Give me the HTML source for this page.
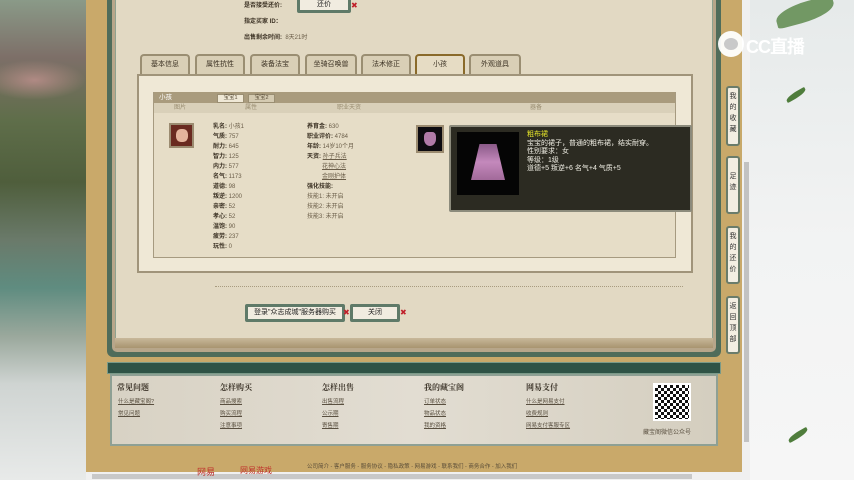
<!DOCTYPE html>
<html><head><meta charset="utf-8"><style>
*{margin:0;padding:0;box-sizing:border-box}
body{width:854px;height:480px;overflow:hidden;position:relative;background:#eef0ef;font-family:"Liberation Sans","Noto Sans CJK SC",sans-serif;font-size:7px;color:#5a4d38}
.a{position:absolute}
.tab{position:absolute;top:54px;height:21px;background:#d9cfb6;border:2px solid #9a8e72;border-bottom:none;border-radius:4px 4px 0 0;font-size:7px;color:#3c3224;text-align:center;line-height:18px}
.lbl{position:absolute;font-size:6px;line-height:10px;color:#6a5d48}
.lbl b{font-weight:bold;color:#3c3224}
.btn{position:absolute;height:18px;background:#f1ece0;border:3px solid #5f7a68;border-radius:2px;font-size:7px;line-height:12px;text-align:center;color:#222}
.fh{position:absolute;top:382px;font-size:8px;font-weight:bold;color:#3b3328;font-family:"Noto Serif CJK SC",serif}
.fl{position:absolute;font-size:5.5px;color:#5a5040;text-decoration:underline;line-height:12px}
.side{position:absolute;left:726px;width:14px;background:#f3eee2;border:2px solid #6a7c6a;border-radius:3px;font-size:7px;text-align:center;line-height:11px;color:#333;padding-top:3px}
</style></head><body>
<div class="a" style="left:0;top:0;width:86px;height:480px;background:linear-gradient(180deg,#8a9a88 0%,#7d6f68 12%,#5f6e4a 25%,#4f5e3c 38%,#6a7a6a 50%,#5f8c80 60%,#9aa89c 70%,#cfd4d2 80%,#e8eae9 100%)"></div>
<div class="a" style="left:0;top:60px;width:86px;height:40px;background:radial-gradient(ellipse at 40% 50%,#b08a84 0%,rgba(160,120,110,0) 70%)"></div>
<div class="a" style="left:750px;top:0;width:104px;height:480px;background:linear-gradient(180deg,#e6eaea,#f2f3f3 50%,#f6f6f6)"></div>
<div class="a" style="left:775px;top:2px;width:60px;height:20px;background:#5d8a4c;border-radius:60% 10% 60% 10%;transform:rotate(-15deg);opacity:.85"></div>
<div class="a" style="left:785px;top:92px;width:22px;height:6px;background:#4f7d3c;border-radius:60% 10%;transform:rotate(-30deg)"></div>
<div class="a" style="left:787px;top:432px;width:22px;height:6px;background:#4f7d3c;border-radius:60% 10%;transform:rotate(-30deg)"></div>
<div class="a" style="left:86px;top:0;width:656px;height:472px;background:#c9a96a"></div>
<div class="a" style="left:742px;top:0;width:8px;height:472px;background:#f0f0f0"></div>
<div class="a" style="left:744px;top:162px;width:5px;height:280px;background:#c2c2c2"></div>
<div class="a" style="left:86px;top:472px;width:664px;height:8px;background:#f0f0f0"></div>
<div class="a" style="left:92px;top:474px;width:600px;height:5px;background:#c8c8c8"></div>
<div class="a" style="left:107px;top:0;width:614px;height:357px;background:#4f6c5a;border-radius:0 0 6px 6px"></div>
<div class="a" style="left:112px;top:0;width:604px;height:352px;background:#b7a68a;border-radius:0 0 5px 5px"></div>
<div class="a" style="left:115px;top:0;width:598px;height:340px;background:#e2d9c3;border:1px solid #8ea28f;border-top:none"></div>
<div class="a" style="left:115px;top:338px;width:598px;height:10px;background:linear-gradient(#c8b89a,#a89470)"></div>
<div class="a" style="left:718px;top:31px;width:26px;height:26px;border-radius:50%;background:#fff;opacity:.95"></div>
<div class="a" style="left:724px;top:38px;width:14px;height:12px;border-radius:50%;background:#c9c9c9"></div>
<div class="a" style="left:746px;top:33px;font-size:18px;color:#fff;font-weight:bold;letter-spacing:-1px">CC直播</div>
<div class="lbl" style="left:244px;top:1px"><b>是否接受还价:</b></div>
<div class="btn" style="left:297px;top:-3px;width:54px;height:16px;line-height:10px">还价</div>
<div class="a" style="left:351px;top:1px;color:#c0202a;font-size:8px">✖</div>
<div class="lbl" style="left:244px;top:17px"><b>指定买家 ID：</b></div>
<div class="lbl" style="left:244px;top:33px"><b>出售剩余时间:</b>&nbsp; 8天21时</div>
<div class="tab" style="left:140px;width:50px">基本信息</div>
<div class="tab" style="left:195px;width:50px">属性抗性</div>
<div class="tab" style="left:250px;width:50px">装备法宝</div>
<div class="tab" style="left:305px;width:52px">坐骑召唤兽</div>
<div class="tab" style="left:361px;width:50px">法术修正</div>
<div class="tab" style="left:415px;width:50px;border-color:#8a6a2a;background:#e6dcc4">小孩</div>
<div class="tab" style="left:469px;width:52px">外观道具</div>
<div class="a" style="left:137px;top:74px;width:556px;height:199px;background:#efe8d6;border:2px solid #a0947a"></div>
<div class="a" style="left:153px;top:92px;width:523px;height:166px;background:#e6ddc7;border:1px solid #a69a80"></div>
<div class="a" style="left:154px;top:92px;width:521px;height:11px;background:#a99b7d"></div>
<div class="a" style="left:159px;top:93px;color:#fff;font-size:6.5px;line-height:9px">小孩</div>
<div class="a" style="left:217px;top:94px;width:27px;height:9px;background:#efe8d6;border:1px solid #9a8e72;font-size:5.5px;text-align:center;line-height:7px">宝宝1</div>
<div class="a" style="left:248px;top:94px;width:27px;height:9px;background:#d4cab1;border:1px solid #9a8e72;font-size:5.5px;text-align:center;line-height:7px">宝宝2</div>
<div class="a" style="left:154px;top:103px;width:521px;height:10px;background:#d9d0b9"></div>
<div class="lbl" style="left:174px;top:103px;color:#9a8e72">图片</div>
<div class="lbl" style="left:245px;top:103px;color:#9a8e72">属性</div>
<div class="lbl" style="left:337px;top:103px;color:#9a8e72">职业天资</div>
<div class="lbl" style="left:530px;top:103px;color:#9a8e72">器备</div>
<div class="a" style="left:169px;top:123px;width:25px;height:25px;background:#6a2a20;border:2px solid #9b8b70"><div style="margin:4px auto;width:12px;height:13px;background:#e4b49c;border-radius:40%"></div></div>
<div class="lbl" style="left:213px;top:122px"><b>乳名:</b> 小孩1<br><b>气质:</b> 757<br><b>耐力:</b> 645<br><b>智力:</b> 125<br><b>内力:</b> 577<br><b>名气:</b> 1173<br><b>道德:</b> 98<br><b>叛逆:</b> 1200<br><b>亲密:</b> 52<br><b>孝心:</b> 52<br><b>温饱:</b> 90<br><b>疲劳:</b> 237<br><b>玩性:</b> 0</div>
<div class="lbl" style="left:307px;top:122px"><b>养育金:</b> 630<br><b>职业评价:</b> 4784<br><b>年龄:</b> 14岁10个月<br><b>天资:</b> <u>孙子兵法</u><br>&nbsp;&nbsp;&nbsp;&nbsp;&nbsp;&nbsp;&nbsp;&nbsp;&nbsp;<u>花神心法</u><br>&nbsp;&nbsp;&nbsp;&nbsp;&nbsp;&nbsp;&nbsp;&nbsp;&nbsp;<u>金刚护体</u><br><b>强化技能:</b><br>技能1: 未开启<br>技能2: 未开启<br>技能3: 未开启</div>
<div class="a" style="left:416px;top:125px;width:28px;height:28px;background:#0d0b10;border:2px solid #9b8b70"><div style="margin:5px auto;width:12px;height:14px;background:#b07aa8;border-radius:30% 30% 50% 50%"></div></div>
<div class="a" style="left:449px;top:125px;width:243px;height:87px;background:#2c2b22;border:2px solid #8c8b7c;border-radius:2px"></div>
<div class="a" style="left:457px;top:132px;width:62px;height:63px;background:#050505"><div style="margin:12px auto 0;width:34px;height:36px;background:linear-gradient(#8a5a88,#c489bc 50%,#a26a9a);clip-path:polygon(25% 0,75% 0,100% 100%,0 100%)"></div></div>
<div class="a" style="left:527px;top:131px;font-size:7px;line-height:8.5px;color:#f2f0e6"><span style="color:#e6e62a">粗布裙</span><br>宝宝的裙子，普通的粗布裙，结实耐穿。<br>性别要求：女<br>等级：1级<br>道德+5 叛逆+6 名气+4 气质+5</div>
<div class="a" style="left:215px;top:286px;width:468px;border-top:1px dotted #a89c80"></div>
<div class="btn" style="left:245px;top:304px;width:100px">登录"众志成城"服务器购买</div>
<div class="a" style="left:343px;top:308px;color:#c0202a;font-size:8px">✖</div>
<div class="btn" style="left:350px;top:304px;width:50px">关闭</div>
<div class="a" style="left:400px;top:308px;color:#c0202a;font-size:8px">✖</div>
<div class="side" style="top:86px;height:60px">我<br>的<br>收<br>藏</div>
<div class="side" style="top:156px;height:58px;padding-top:13px">足<br>迹</div>
<div class="side" style="top:226px;height:58px">我<br>的<br>还<br>价</div>
<div class="side" style="top:296px;height:58px">返<br>回<br>顶<br>部</div>
<div class="a" style="left:107px;top:362px;width:614px;height:12px;background:#2f5346;border:1px solid #7a9a88"></div>
<div class="a" style="left:110px;top:374px;width:608px;height:72px;background:linear-gradient(90deg,#d8d2c4,#e2ddd2 50%,#d4cebf);border:2px solid #8ea094"></div>
<div class="fh" style="left:117px">常见问题</div>
<div class="fh" style="left:220px">怎样购买</div>
<div class="fh" style="left:322px">怎样出售</div>
<div class="fh" style="left:424px">我的藏宝阁</div>
<div class="fh" style="left:526px">网易支付</div>
<div class="fl" style="left:118px;top:396px">什么是藏宝阁?<br>常见问题</div>
<div class="fl" style="left:220px;top:396px">商品搜索<br>购买流程<br>注意事项</div>
<div class="fl" style="left:322px;top:396px">出售流程<br>公示期<br>寄售期</div>
<div class="fl" style="left:424px;top:396px">订单状态<br>物品状态<br>我的资格</div>
<div class="fl" style="left:526px;top:396px">什么是网易支付<br>收费规则<br>网易支付客服专区</div>
<div class="a" style="left:653px;top:383px;width:38px;height:38px;background:repeating-conic-gradient(#111 0 25%,#fff 0 50%) 0 0/6px 6px;border:2px solid #fff"></div>
<div class="a" style="left:643px;top:427px;font-size:6px;color:#5a5040">藏宝阁微信公众号</div>
<div class="a" style="left:307px;top:462px;font-size:5.5px;color:#5a4d38">公司简介 - 客户服务 - 服务协议 - 隐私政策 - 网易游戏 - 联系我们 - 商务合作 - 加入我们</div>
<div class="a" style="left:197px;top:465px;font-size:9px;color:#c0302a">网易</div>
<div class="a" style="left:240px;top:465px;font-size:8px;color:#c0302a">网易游戏</div>
</body></html>
